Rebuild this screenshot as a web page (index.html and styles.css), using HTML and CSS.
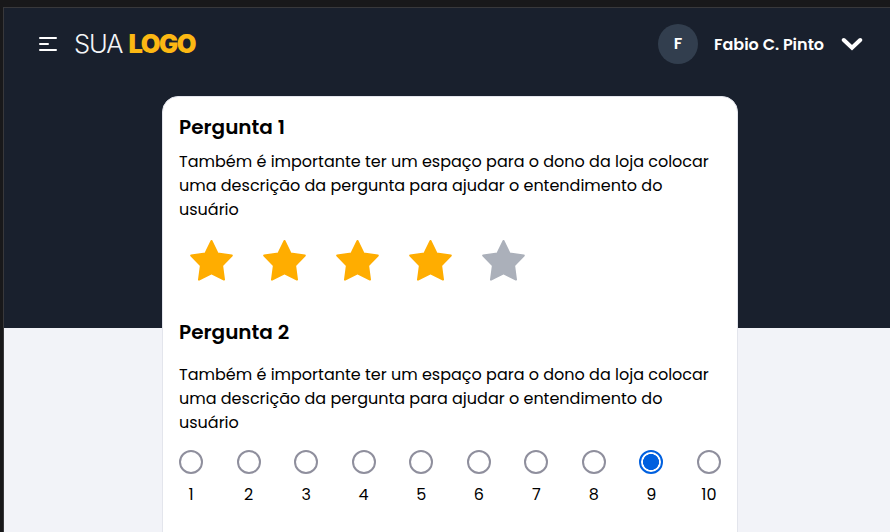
FILE: index.html
```html
<!DOCTYPE html>
<html lang="pt-BR">
<head>
<meta charset="utf-8">
<title>Pesquisa</title>
<link rel="stylesheet" href="styles.css">
</head>
<body>
<div class="app">
  <header class="topbar">
    <svg class="menu" width="18" height="14" viewBox="0 0 18 14" fill="none" stroke="#fff" stroke-width="2" stroke-linecap="round"><path d="M1 1H17M1 7H9M1 13H17"/></svg>
    <div class="logo"><span class="logo-light">SUA</span><span class="logo-bold">LOGO</span></div>
    <div class="user">
      <span class="avatar">F</span>
      <span class="user-name">Fabio C. Pinto</span>
      <svg class="chevron" width="22" height="14" viewBox="0 0 22 14" fill="none" stroke="#fff" stroke-width="4"><path d="M2.8 3L11 10.8L19.2 3" stroke-linecap="round"/></svg>
    </div>
  </header>
  <main class="card">
    <section class="question">
      <h2>Pergunta 1</h2>
      <p>Também é importante ter um espaço para o dono da loja colocar uma descrição da pergunta para ajudar o entendimento do usuário</p>
      <svg width="0" height="0" class="defs"><symbol id="star" viewBox="0 0 44 42"><path d="M22.5 2L28.7 14.6L42.8 16.5L33.1 26.5L35 40.6L22.5 34.4L10 40.6L11.9 26.5L2.2 16.5L16.3 14.6Z" fill="currentColor" stroke="currentColor" stroke-width="2" stroke-linejoin="round"/></symbol></svg>
      <div class="stars">
        <svg class="star"><use href="#star"/></svg>
        <svg class="star"><use href="#star"/></svg>
        <svg class="star"><use href="#star"/></svg>
        <svg class="star"><use href="#star"/></svg>
        <svg class="star off"><use href="#star"/></svg>
      </div>
    </section>
    <section class="question second">
      <h2>Pergunta 2</h2>
      <p>Também é importante ter um espaço para o dono da loja colocar uma descrição da pergunta para ajudar o entendimento do usuário</p>
      <div class="scale">
        <label><i class="radio"></i>1</label>
        <label><i class="radio"></i>2</label>
        <label><i class="radio"></i>3</label>
        <label><i class="radio"></i>4</label>
        <label><i class="radio"></i>5</label>
        <label><i class="radio"></i>6</label>
        <label><i class="radio"></i>7</label>
        <label><i class="radio"></i>8</label>
        <label><i class="radio on"></i>9</label>
        <label><i class="radio"></i>10</label>
      </div>
    </section>
  </main>
</div>
</body>
</html>
```
FILE: styles.css
```css
* { box-sizing: border-box; }
body {
  margin: 0;
  height: 532px;
  overflow: hidden;
  padding: 7px 0 0 3px;
  background: #18181a;
  font-family: Poppins, Inter, sans-serif;
  color: #000;
}
.app {
  height: 525px;
  border: solid #38383b;
  border-width: 1px 0 0 1px;
  background: linear-gradient(#19202d 320px, #f2f3f8 320px);
}
.topbar {
  display: flex;
  align-items: center;
  height: 72px;
  padding: 0 27px 0 35px;
}
.menu { display: block; }
.logo {
  display: flex;
  gap: 6px;
  margin-left: 17px;
  font-family: Inter, "Liberation Sans", sans-serif;
  font-size: 25.5px;
  line-height: 32px;
}
.logo-light { width: 48.5px; color: #f4f5f7; font-weight: 300; letter-spacing: -1.1px; }
.logo-bold { color: #fcb813; font-weight: 900; letter-spacing: -1.5px; }
.user {
  display: flex;
  align-items: center;
  margin-left: auto;
  color: #fff;
  font-weight: 600;
  font-size: 16px;
}
.avatar {
  width: 40px;
  height: 40px;
  border-radius: 50%;
  background: #323e4e;
  line-height: 40px;
  text-align: center;
}
.user-name { width: 111px; margin: 0 16px; white-space: nowrap; }
.card {
  width: 576px;
  height: 460px;
  margin: 16px 0 0 158px;
  padding: 15px 16px;
  border: 1px solid #e3e5ec;
  border-radius: 16px;
  background: #fff;
}
h2 {
  margin: 0;
  font-size: 20px;
  line-height: 30px;
  font-weight: 600;
}
p {
  margin: 8px 0 0;
  font-size: 16px;
  line-height: 24px;
}
.defs { display: block; }
.stars {
  display: flex;
  gap: 29px;
  padding: 17px 0 0 10px;
}
.star { width: 44px; height: 42px; color: #ffad00; }
.star.off { color: #abb0ba; }
.second { margin-top: 36px; }
.second p { margin-top: 16px; }
.scale {
  display: flex;
  justify-content: space-between;
  margin-top: 15px;
  font-size: 16px;
  line-height: 24px;
}
.scale label {
  display: flex;
  flex-direction: column;
  align-items: center;
  gap: 9px;
  width: 24px;
}
.radio {
  width: 24px;
  height: 24px;
  border: 2px solid #8f8f9d;
  border-radius: 50%;
}
.radio.on {
  border-color: #0060df;
  background: radial-gradient(circle, #0060df 7.7px, #fff 8.3px);
}
```
